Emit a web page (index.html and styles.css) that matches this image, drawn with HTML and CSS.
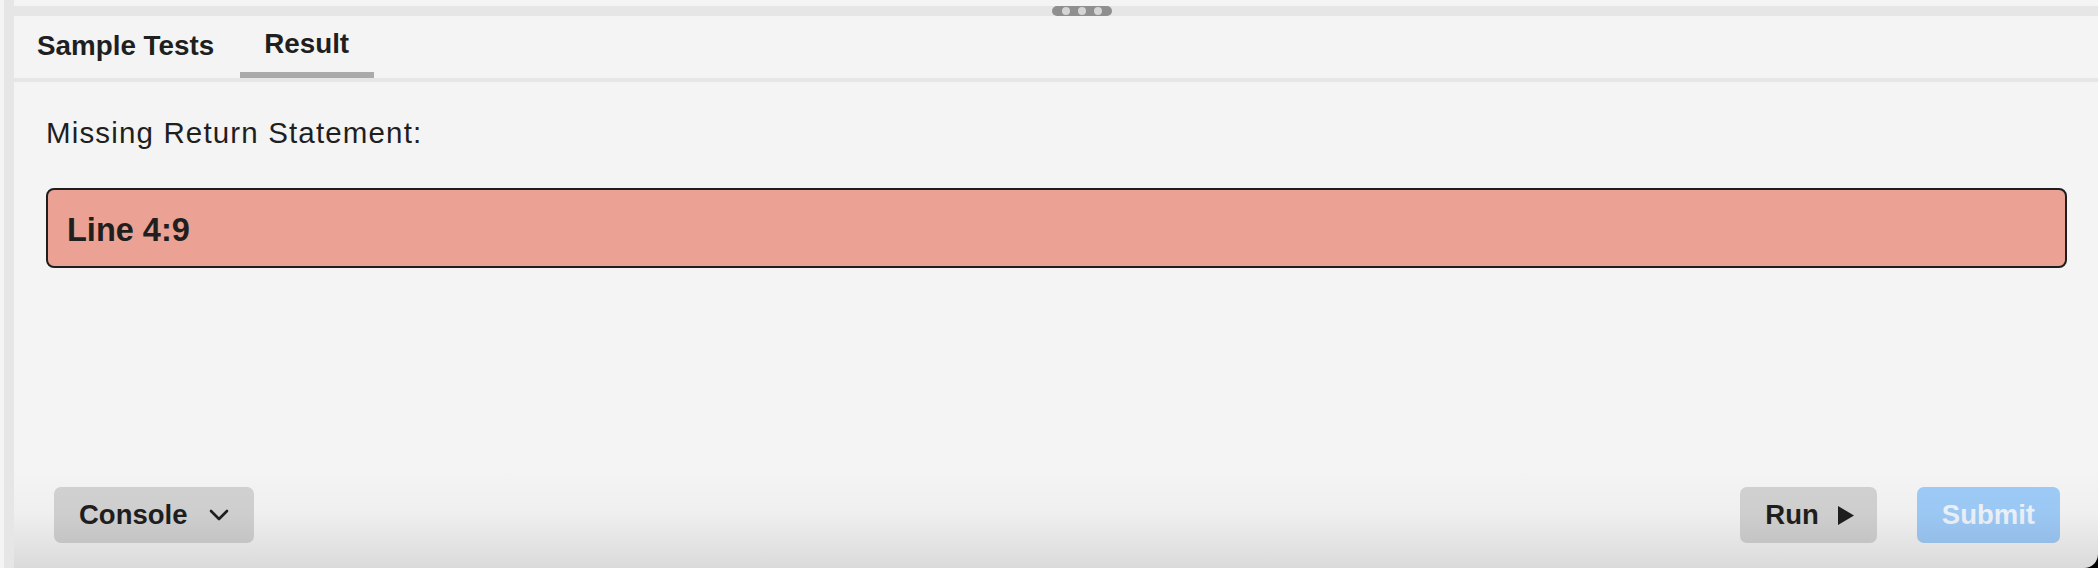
FILE: index.html
```html
<!DOCTYPE html>
<html lang="en">
<head>
<meta charset="utf-8">
<title>Result</title>
<link rel="stylesheet" href="styles.css">
</head>
<body>
<div class="app">
  <div class="side-bar"></div>
  <div class="main">
    <div class="top-gap"></div>
    <div class="splitter">
      <div class="handle"><span class="dot"></span><span class="dot"></span><span class="dot"></span></div>
    </div>
    <div class="tabs">
      <div class="tab">Sample Tests</div>
      <div class="tab tab-active">Result</div>
    </div>
    <div class="panel">
      <div class="message">Missing Return Statement:</div>
      <div class="error-box">Line 4:9</div>
    </div>
    <div class="footer">
      <button class="btn btn-gray">Console
        <svg class="chevron" width="20" height="12" viewBox="0 0 20 12"><path d="M2 2 L10 10 L18 2" fill="none" stroke="#1f1f1f" stroke-width="2.6" stroke-linecap="round" stroke-linejoin="round"/></svg>
      </button>
      <div class="spacer"></div>
      <button class="btn btn-gray btn-run">Run
        <svg class="play" width="16" height="19" viewBox="0 0 16 19"><polygon points="0,0 16,9.5 0,19" fill="#1f1f1f"/></svg>
      </button>
      <button class="btn btn-blue">Submit</button>
    </div>
    <div class="fade"></div>
  </div>
</div>
</body>
</html>
```
FILE: styles.css
```css
* { box-sizing: border-box; }
html, body {
  margin: 0;
  padding: 0;
  height: 100%;
  background: #000;
}
body {
  font-family: "Liberation Sans", Arial, Helvetica, sans-serif;
  color: #1f1f1f;
}
.app {
  display: flex;
  height: 100vh;
  background: #f4f4f4;
  padding-left: 4px;
  border-bottom-right-radius: 14px;
  overflow: hidden;
}
.side-bar {
  width: 10px;
  flex: none;
  background: #e6e6e6;
}
.main {
  position: relative;
  flex: 1;
  display: flex;
  flex-direction: column;
  min-width: 0;
}
.top-gap { height: 6px; flex: none; }
.splitter {
  height: 10px;
  flex: none;
  background: #e6e6e6;
  display: flex;
  padding-left: 1038px;
}
.handle {
  width: 60px;
  height: 10px;
  background: #8f8f8f;
  border-radius: 5px;
  display: flex;
  align-items: center;
  gap: 8px;
  padding: 0 10px;
}
.dot {
  width: 8px;
  height: 8px;
  border-radius: 50%;
  background: #d5d5d5;
}
.tabs {
  display: flex;
  height: 66px;
  flex: none;
  border-bottom: 4px solid #e6e6e6;
}
.tab {
  height: 62px;
  font-size: 27.8px;
  font-weight: bold;
  line-height: 32px;
  padding: 13.5px 26px 0 23px;
  white-space: nowrap;
}
.tab-active {
  padding: 11.5px 25px 0 24px;
  border-bottom: 6px solid #aaaaaa;
}
.panel {
  flex: 1;
  padding: 33px 31px 0 32px;
}
.message {
  font-size: 29.5px;
  line-height: 36px;
  letter-spacing: 1.15px;
}
.error-box {
  margin-top: 37px;
  height: 80px;
  border: 2px solid #1e1e1e;
  border-radius: 8px;
  background: #eba194;
  font-size: 32.5px;
  font-weight: bold;
  line-height: 36px;
  padding: 22px 18px 0 19px;
}
.footer {
  display: flex;
  align-items: center;
  gap: 40px;
  padding: 0 38px 25px 40px;
  flex: none;
}
.spacer { flex: 1; }
.btn {
  height: 56px;
  border: none;
  border-radius: 7px;
  font-family: "Liberation Sans", Arial, Helvetica, sans-serif;
  font-size: 27.5px;
  font-weight: bold;
  line-height: 32px;
  padding: 0 25px;
  display: flex;
  align-items: center;
  color: #1f1f1f;
}
.btn-gray { background: #d2d2d2; }
.btn-run { padding: 0 23px 0 25px; }
.btn-blue { background: #9ecbf8; color: #eef4fb; }
.chevron { margin-left: 22px; }
.play { margin-left: 19px; }
.fade {
  position: absolute;
  left: 0;
  right: 0;
  bottom: 0;
  height: 100px;
  background: linear-gradient(to bottom, rgba(0,0,0,0) 0%, rgba(0,0,0,0.02) 45%, rgba(0,0,0,0.105) 100%);
  pointer-events: none;
}
```
